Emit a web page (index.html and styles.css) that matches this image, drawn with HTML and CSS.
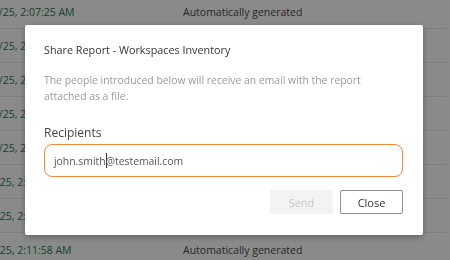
FILE: index.html
```html
<!DOCTYPE html>
<html>
<head>
<meta charset="utf-8">
<link rel="stylesheet" href="styles.css">
</head>
<body>
<div class="table">
  <div class="row"><div class="c-date">3/10/25, 2:07:25 AM</div><div class="c-type">Automatically generated</div></div>
  <div class="row"><div class="c-date">3/10/25, 2:08:01 AM</div><div class="c-type">Automatically generated</div></div>
  <div class="row"><div class="c-date">3/10/25, 2:08:40 AM</div><div class="c-type">Automatically generated</div></div>
  <div class="row"><div class="c-date">3/10/25, 2:09:12 AM</div><div class="c-type">Automatically generated</div></div>
  <div class="row"><div class="c-date">3/10/25, 2:09:55 AM</div><div class="c-type">Automatically generated</div></div>
  <div class="row short"><div class="c-date">3/9/25, 2:10:31 AM</div><div class="c-type">Automatically generated</div></div>
  <div class="row short"><div class="c-date">3/9/25, 2:11:07 AM</div><div class="c-type">Automatically generated</div></div>
  <div class="row short"><div class="c-date">3/9/25, 2:11:58 AM</div><div class="c-type">Automatically generated</div></div>
</div>
<div class="overlay">
  <div class="modal">
    <div class="title">Share Report - Workspaces Inventory</div>
    <p class="desc">The people introduced below will receive an email with the report attached as a file.</p>
    <div class="label">Recipients</div>
    <div class="input">john.smith<span class="caret"></span>@testemail.com</div>
    <div class="actions">
      <button class="btn btn-send">Send</button>
      <button class="btn btn-close">Close</button>
    </div>
  </div>
</div>
</body>
</html>
```
FILE: styles.css
```css
html, body {
  margin: 0;
  padding: 0;
  width: 450px;
  height: 260px;
  overflow: hidden;
  background: #fff;
  font-family: "Open Sans", "Noto Sans", sans-serif;
}
.table {
  margin-top: -5px;
  margin-left: -23px;
  width: 470px;
}
.row {
  display: flex;
  align-items: center;
  height: 34px;
  box-sizing: border-box;
  padding-top: 1px;
  border-bottom: 1px solid #ebebeb;
  font-size: 10.5px;
}
.row.short .c-date {
  margin-left: 3px;
  width: 203px;
}
.c-date {
  width: 206px;
  color: #23804c;
}
.c-type {
  color: #4a4a4a;
}
.overlay {
  position: fixed;
  inset: 0;
  background: rgba(0, 0, 0, 0.46);
  display: flex;
  align-items: center;
  justify-content: center;
}
.modal {
  width: 398px;
  height: 210px;
  box-sizing: border-box;
  margin-left: -2px;
  background: #fff;
  border-radius: 2px;
  box-shadow: 0 2px 6px rgba(0, 0, 0, 0.3);
  padding: 17px 20px 21px 19px;
  display: flex;
  flex-direction: column;
}
.title {
  font-size: 10.8px;
  line-height: 16px;
  color: #333;
}
.desc {
  margin: 14px 0 0;
  font-size: 10.4px;
  line-height: 16px;
  color: #9a9a9a;
}
.label {
  margin-top: 21px;
  font-size: 12px;
  line-height: 16px;
  color: #444;
}
.input {
  margin-top: 3px;
  height: 33px;
  box-sizing: border-box;
  border: 1px solid #f48a3c;
  border-radius: 8px;
  padding: 0 9px;
  display: flex;
  align-items: center;
  font-size: 10.4px;
  color: #555;
}
.caret {
  display: inline-block;
  width: 1px;
  height: 15px;
  background: #333;
  margin-right: -1px;
}
.actions {
  margin-top: 13px;
  display: flex;
  justify-content: flex-end;
  gap: 7px;
}
.btn {
  width: 63px;
  height: 24px;
  box-sizing: border-box;
  border-radius: 2px;
  font-family: "Open Sans", "Noto Sans", sans-serif;
  font-size: 11px;
  padding: 0;
}
.btn-send {
  background: #f3f3f3;
  border: 1px solid #f3f3f3;
  color: #c6c6c6;
}
.btn-close {
  background: #fff;
  border: 1px solid #8e8e8e;
  color: #333;
}
```
